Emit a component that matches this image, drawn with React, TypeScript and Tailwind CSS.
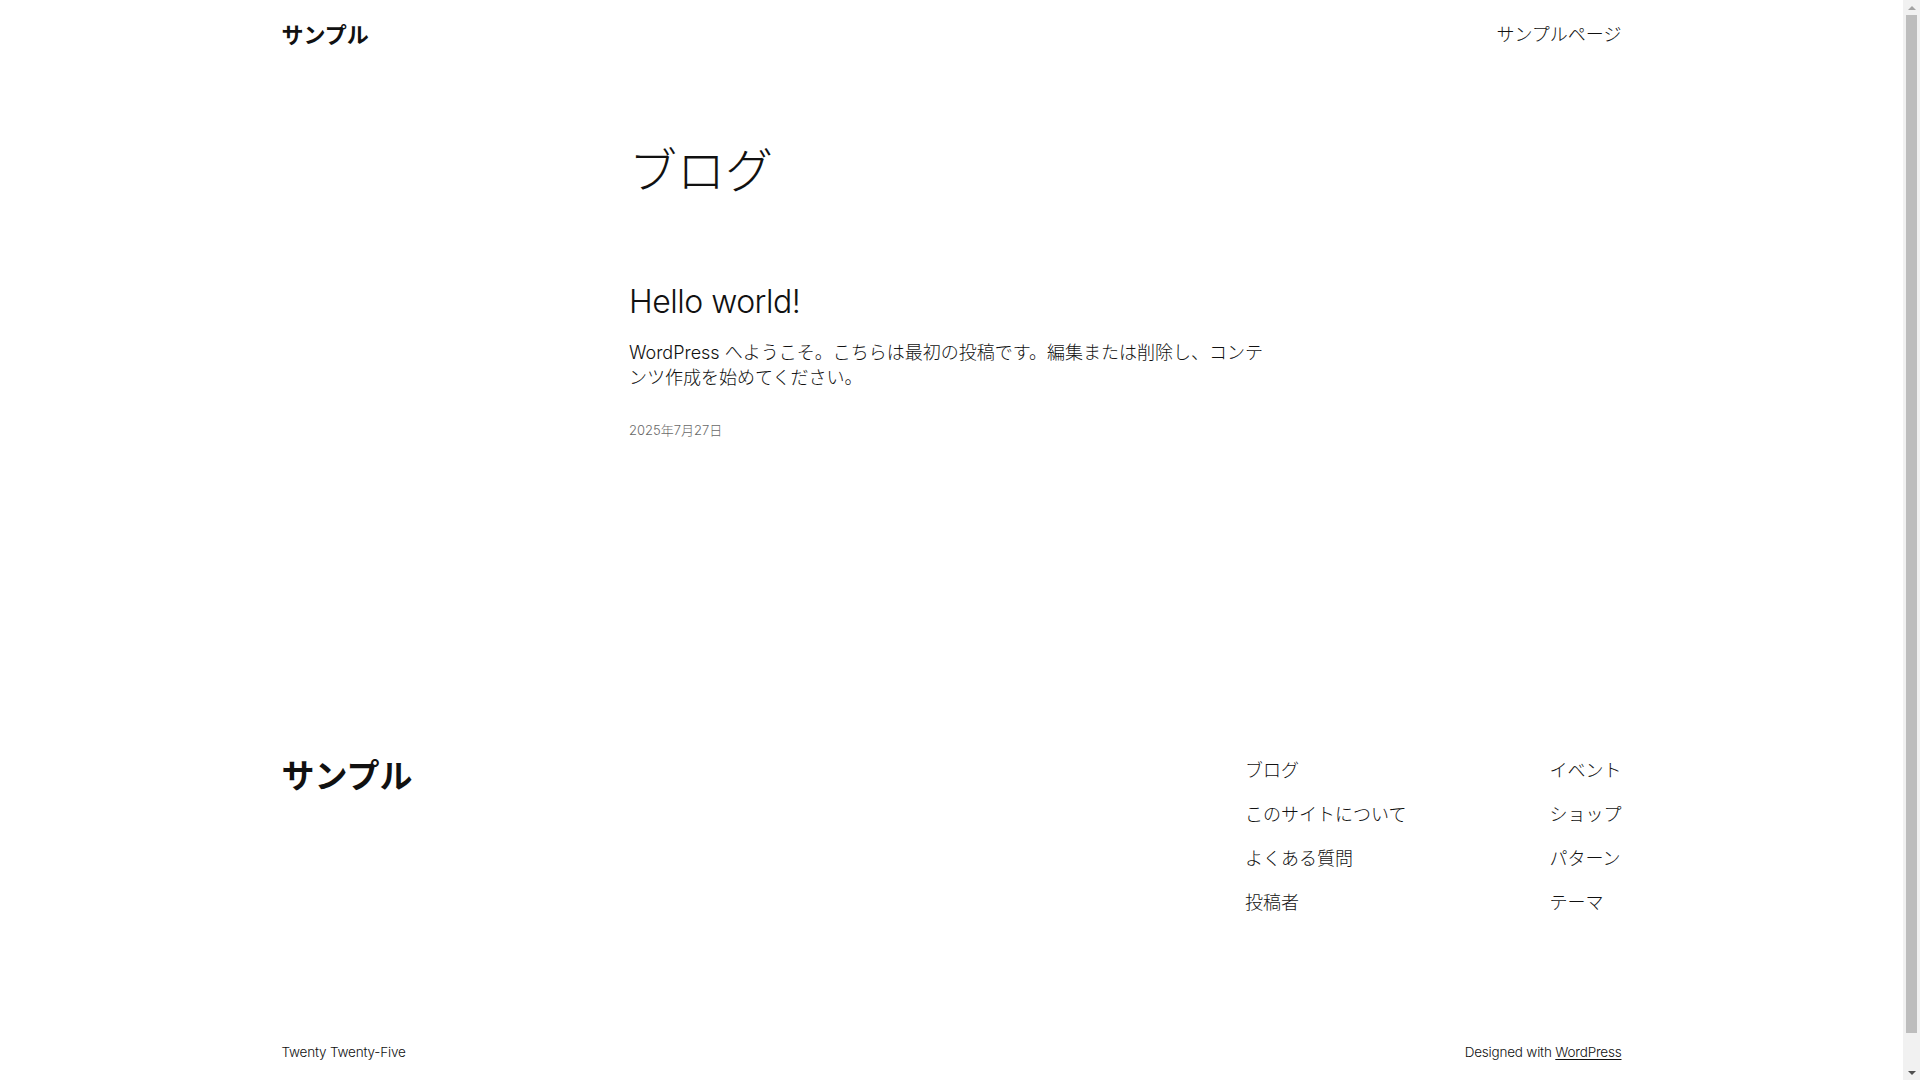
import React from 'react';

const font = 'font-["Inter","Noto_Sans_CJK_JP",sans-serif]';

const navLeft = ['ブログ', 'このサイトについて', 'よくある質問', '投稿者'];
const navRight = ['イベント', 'ショップ', 'パターン', 'テーマ'];

function Header() {
  return (
    <header className="mx-auto flex h-[69px] w-[1340px] items-center justify-between">
      <a href="#" className="text-[22px] font-semibold leading-[28px] text-[#111111]">
        サンプル
      </a>
      <nav>
        <a href="#" className="text-[18px] font-light leading-[25px] text-[#111111]">
          サンプルページ
        </a>
      </nav>
    </header>
  );
}

function Post() {
  return (
    <article className="mt-[86px]">
      <h2 className="text-[32px] font-light leading-[36px] tracking-[-0.5px] text-[#111111]">
        <a href="#">Hello world!</a>
      </h2>
      <p className="mt-[20px] text-[18px] font-light leading-[25.2px] text-[#111111]">
        WordPress へようこそ。こちらは最初の投稿です。編集または削除し、コンテンツ作成を始めてください。
      </p>
      <time className="mt-[30px] block text-[13px] font-light leading-[20px] text-[#686868]">
        2025年7月27日
      </time>
    </article>
  );
}

function Footer() {
  return (
    <footer className="mx-auto mt-[317px] w-[1340px] pb-[57px]">
      <div className="flex items-start justify-between">
        <a href="#" className="text-[33px] font-semibold leading-[38px] text-[#111111]">
          サンプル
        </a>
        <div className="flex gap-[143px] pt-[1px]">
          <ul className="flex flex-col gap-[19px]">
            {navLeft.map((item) => (
              <li key={item} className="text-[18px] font-light leading-[25px] text-[#111111]">
                <a href="#">{item}</a>
              </li>
            ))}
          </ul>
          <ul className="flex flex-col gap-[19px]">
            {navRight.map((item) => (
              <li key={item} className="text-[18px] font-light leading-[25px] text-[#111111]">
                <a href="#">{item}</a>
              </li>
            ))}
          </ul>
        </div>
      </div>
      <div className="mt-[127px] flex items-center justify-between text-[13.5px] font-light leading-[20px] tracking-[-0.2px] text-[#111111]">
        <p>Twenty Twenty-Five</p>
        <p>
          Designed with{' '}
          <a href="#" className="underline underline-offset-2">
            WordPress
          </a>
        </p>
      </div>
    </footer>
  );
}

// browser scrollbar as seen in the screenshot
function Scrollbar() {
  return (
    <aside className="fixed right-0 top-0 flex h-screen w-[17px] flex-col items-center bg-[#f1f1f1]">
      <div className="flex h-[15px] items-center justify-center">
        <span className="h-0 w-0 border-x-[4px] border-b-[4px] border-x-transparent border-b-[#a3a3a3]" />
      </div>
      <div className="h-[1018px] w-[11px] bg-[#bdbdbd]" />
      <div className="flex-1" />
      <div className="flex h-[15px] items-center justify-center">
        <span className="h-0 w-0 border-x-[4px] border-t-[4px] border-x-transparent border-t-[#505050]" />
      </div>
    </aside>
  );
}

export default function App() {
  return (
    <div className={`min-h-screen bg-white ${font} antialiased`}>
      <div className="w-[1903px]">
        <Header />
        <main className="mx-auto w-[645px]">
          <h1 className="mt-[75px] text-[48px] font-light leading-[54px] text-[#111111]">ブログ</h1>
          <Post />
        </main>
        <Footer />
      </div>
      <Scrollbar />
    </div>
  );
}
